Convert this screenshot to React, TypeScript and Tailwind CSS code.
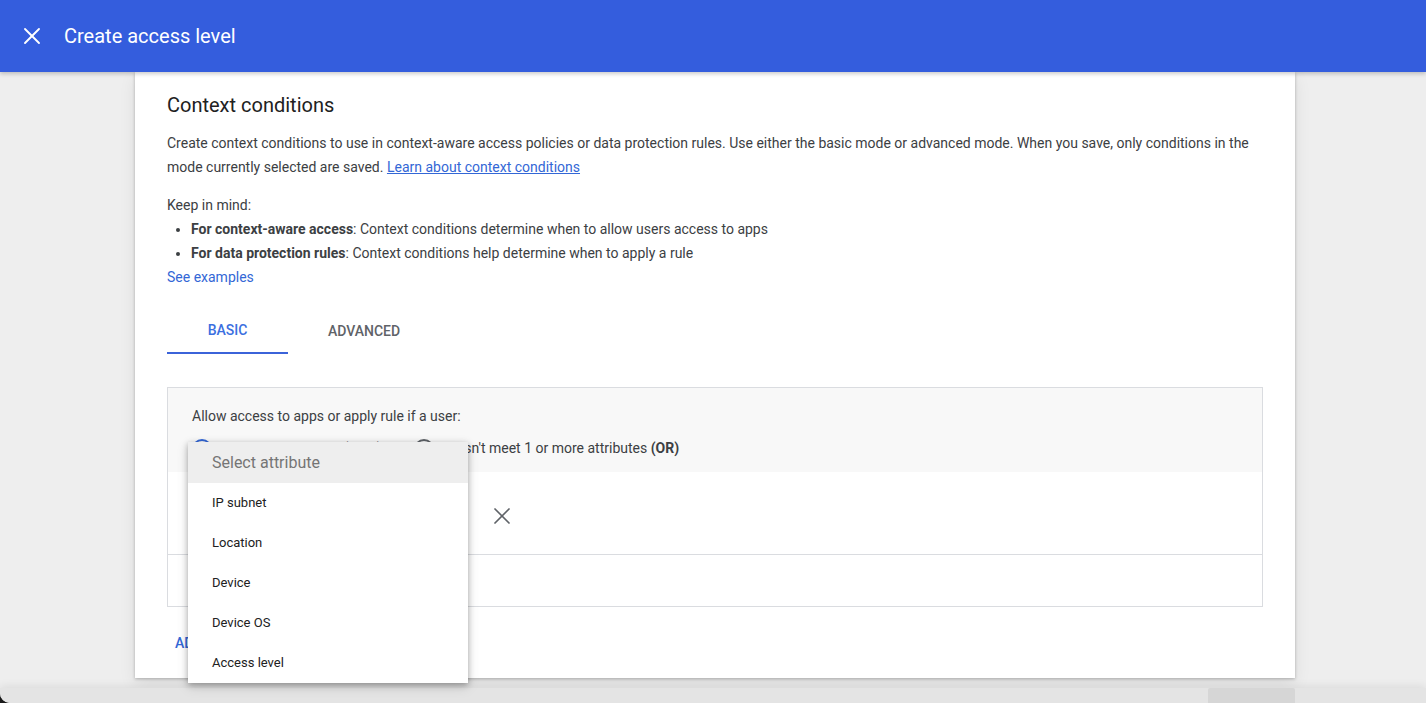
import { X } from "lucide-react";

const attributes = ["IP subnet", "Location", "Device", "Device OS", "Access level"];

function Radio({ checked }: { checked?: boolean }) {
  return (
    <span
      className={`inline-flex size-5 shrink-0 items-center justify-center rounded-full border-2 ${
        checked ? "border-[#3367d6]" : "border-[#5f6368]"
      }`}
    >
      {checked && <span className="size-2.5 rounded-full bg-[#3367d6]" />}
    </span>
  );
}

function AttributeMenu() {
  return (
    <div className="absolute left-[20px] top-[54px] z-10 w-[280px] bg-white shadow-[0_2px_6px_rgba(0,0,0,0.3),0_4px_12px_rgba(0,0,0,0.12)]">
      <div className="flex h-[41px] items-center bg-[#eeeeee] px-6 text-[16px] text-[#757575]">
        Select attribute
      </div>
      {attributes.map((item) => (
        <div key={item} className="flex h-10 items-center px-6 text-[13px] text-[#212121]">
          {item}
        </div>
      ))}
    </div>
  );
}

export default function App() {
  return (
    <div className="h-[703px] w-[1426px] overflow-hidden bg-[#1a1a1a]">
      <div
        className="relative flex h-full w-full flex-col overflow-hidden rounded-bl-[10px] bg-[#eeeeee]"
        style={{ fontFamily: "Roboto, 'Liberation Sans', sans-serif" }}
      >
        <header className="relative z-20 flex h-[72px] shrink-0 items-center bg-[#345ddd] shadow-[0_2px_4px_rgba(0,0,0,0.2)]">
          <X className="ml-[18px] size-7 text-white" strokeWidth={1.6} />
          <h1 className="ml-[18px] text-[20px] text-white">Create access level</h1>
        </header>

        <main className="ml-[135px] h-[606px] w-[1160px] shrink-0 bg-white px-8 pt-[19px] shadow-[0_1px_3px_rgba(0,0,0,0.25),0_6px_16px_rgba(0,0,0,0.08)]">
          <h2 className="text-[20px] leading-[28px] text-[#212121]">Context conditions</h2>
          <p className="mt-[12px] text-[14px] leading-6 text-[#3c4043]">
            Create context conditions to use in context-aware access policies or data protection rules. Use either the basic mode or advanced mode. When you save, only conditions in the mode currently selected are saved.{" "}
            <a className="text-[#3367d6] underline">Learn about context conditions</a>
          </p>
          <p className="mt-[14px] text-[14px] leading-6 text-[#3c4043]">Keep in mind:</p>
          <ul className="list-disc pl-6 text-[14px] leading-6 text-[#3c4043]">
            <li>
              <b className="font-bold text-[#3c4043]">For context-aware access</b>: Context conditions determine when to allow users access to apps
            </li>
            <li>
              <b className="font-bold text-[#3c4043]">For data protection rules</b>: Context conditions help determine when to apply a rule
            </li>
          </ul>
          <a className="block text-[14px] leading-6 text-[#3367d6]">See examples</a>

          <div className="mt-[17px] flex">
            <div className="flex h-12 w-[121px] items-center justify-center border-b-2 border-[#3b63d9] pt-[2px] text-[14px] font-medium text-[#3b6fe0]">
              BASIC
            </div>
            <div className="flex h-12 w-[152px] items-center justify-center pt-[2px] text-[14px] font-medium text-[#5f6368]">
              ADVANCED
            </div>
          </div>

          <div className="relative mt-[33px] border border-[#dadce0]">
            <div className="h-[84px] bg-[#f8f8f8] px-6 pt-[18px]">
              <p className="text-[14px] leading-5 text-[#3c4043]">Allow access to apps or apply rule if a user:</p>
              <div className="mt-[12px] flex items-center text-[14px] text-[#3c4043]">
                <label className="flex items-center gap-2">
                  <Radio checked />
                  <span>
                    Meets all attributes <b className="font-bold">(AND)</b>
                  </span>
                </label>
                <label className="ml-8 flex items-center gap-[6px]">
                  <Radio />
                  <span>
                    Doesn't meet 1 or more attributes <b className="font-bold">(OR)</b>
                  </span>
                </label>
              </div>
            </div>
            <div className="flex h-[83px] items-center border-b border-[#dadce0] bg-white pl-[320px] pt-[6px]">
              <X className="size-7 text-[#5f6368]" strokeWidth={1.5} />
            </div>
            <div className="h-[51px] bg-white" />
            <AttributeMenu />
          </div>

          <button className="ml-2 mt-[26px] text-[14px] font-medium text-[#3367d6]">ADD CONDITION</button>
        </main>

        <footer className="mt-[10px] flex h-[15px] shrink-0 justify-end bg-[#e4e4e4] pr-[131px] shadow-[0_-2px_8px_rgba(0,0,0,0.08)]">
          <div className="h-full w-[87px] rounded-t-[2px] bg-[#d6d6d6]" />
        </footer>
      </div>
    </div>
  );
}
